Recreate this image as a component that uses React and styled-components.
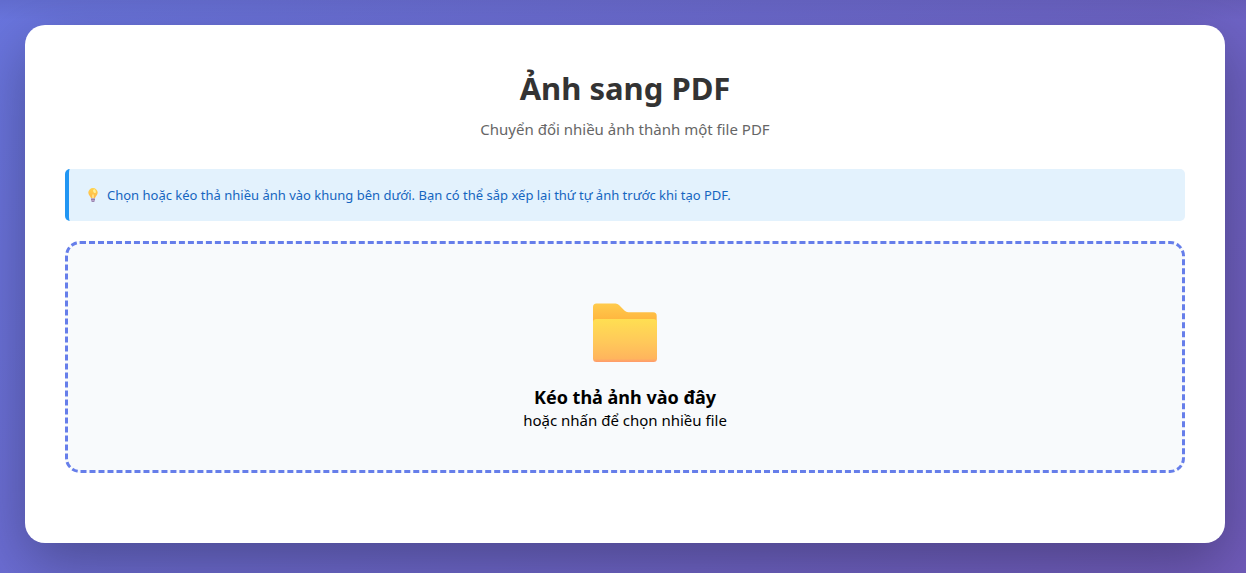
import React from 'react';
import styled, { createGlobalStyle } from 'styled-components';

const GlobalStyle = createGlobalStyle`
  * { box-sizing: border-box; margin: 0; padding: 0; }
  body {
    font-family: 'Segoe UI', 'Noto Sans', 'Open Sans', sans-serif;
    font-size: 15px;
    line-height: 22px;
    color: #000;
  }
`;

const Page = styled.div`
  min-height: 100vh;
  padding: 25px 21px 30px 25px;
  background:
    linear-gradient(180deg, rgba(0, 0, 0, 0.07) 0, rgba(0, 0, 0, 0) 20px),
    linear-gradient(135deg, #6975de 0%, #705bba 100%);
`;

const Card = styled.main`
  max-width: 1200px;
  margin: 0 auto;
  padding: 41px 40px 70px;
  background: #fff;
  border-radius: 20px;
  box-shadow: 0 20px 60px rgba(0, 0, 0, 0.3);
`;

const Title = styled.h1`
  margin-bottom: 8px;
  color: #333;
  font-size: 31px;
  line-height: 44px;
  text-align: center;
`;

const Subtitle = styled.p`
  margin-bottom: 29px;
  color: #666;
  text-align: center;
`;

const InfoBox = styled.div`
  display: flex;
  align-items: center;
  gap: 6px;
  margin-bottom: 20px;
  padding: 16px;
  border-left: 4px solid #2196f3;
  border-radius: 5px;
  background: #e3f2fd;
  color: #1565c0;
  font-size: 13px;
  line-height: 20px;
`;

const BulbIcon = styled.svg`
  flex: none;
  width: 16px;
  height: 16px;
`;

const DropZone = styled.label`
  display: flex;
  flex-direction: column;
  align-items: center;
  padding: 57px 40px 39px;
  border: 3px dashed #667eea;
  border-radius: 15px;
  background: #f8fafc;
  text-align: center;
  cursor: pointer;
`;

const FileInput = styled.input`
  position: absolute;
  width: 1px;
  height: 1px;
  opacity: 0;
`;

const FolderIcon = styled.svg`
  width: 64px;
  height: 64px;
  margin-bottom: 20px;
`;

const DropTitle = styled.strong`
  font-size: 18px;
  line-height: 24px;
`;

const DropHint = styled.span``;

function Bulb() {
  return (
    <BulbIcon viewBox="0 0 16 16" aria-hidden="true">
      <defs>
        <linearGradient id="bulb" x1="0" y1="0" x2="0" y2="1">
          <stop offset="0" stopColor="#ffd34e" />
          <stop offset="1" stopColor="#ffb84a" />
        </linearGradient>
      </defs>
      <path d="M8 1a4.7 4.7 0 0 0-4.7 4.7c0 2.300 2.500 3.500 2.700 5.600h4c.2-2.100 2.700-3.300 2.700-5.600A4.700 4.700 0 0 0 8 1z" fill="url(#bulb)" />
      <ellipse cx="9.500" cy="4.200" rx="1.300" ry="1.900" fill="#fff09a" transform="rotate(-25 9.500 4.200)" />
      <path d="M7 7l1 1 1-1v4.300H7z" fill="#ffdf80" />
      <path d="M6 11.300h4v2.200a1 1 0 0 1-1 1H7a1 1 0 0 1-1-1z" fill="#b6a1c8" />
      <path d="M6 12.400h4M6.700 14.500h2.600" stroke="#836b9c" strokeWidth=".7" />
    </BulbIcon>
  );
}

function Folder() {
  return (
    <FolderIcon viewBox="0 0 64 64" aria-hidden="true">
      <defs>
        <linearGradient id="folderBack" x1="0" y1="0" x2="0" y2="1">
          <stop offset="0" stopColor="#ffcb4c" />
          <stop offset=".36" stopColor="#ffb53f" />
          <stop offset="1" stopColor="#ffb53f" />
        </linearGradient>
        <linearGradient id="folderFront" x1="0" y1="0" x2="0" y2="1">
          <stop offset="0" stopColor="#ffdf52" />
          <stop offset=".55" stopColor="#ffc85a" />
          <stop offset=".92" stopColor="#ffb55d" />
          <stop offset="1" stopColor="#ff9a6c" />
        </linearGradient>
      </defs>
      <path d="M0 6a3.500 3.500 0 0 1 3.500-3.500h19a5 5 0 0 1 3.500 1.500l5.700 5.800a5 5 0 0 0 3.500 1.500h25a3.500 3.500 0 0 1 3.500 3.500V50H0z" fill="url(#folderBack)" />
      <path d="M3.500 18h57a3.500 3.500 0 0 1 3.500 3.500v36a3.500 3.500 0 0 1-3.500 3.500h-57A3.500 3.500 0 0 1 0 57.500v-36A3.500 3.500 0 0 1 3.500 18z" fill="url(#folderFront)" />
    </FolderIcon>
  );
}

export default function App() {
  return (
    <>
      <GlobalStyle />
      <Page>
        <Card>
          <Title>Ảnh sang PDF</Title>
          <Subtitle>Chuyển đổi nhiều ảnh thành một file PDF</Subtitle>
          <InfoBox>
            <Bulb />
            <span>
              Chọn hoặc kéo thả nhiều ảnh vào khung bên dưới. Bạn có thể sắp xếp lại thứ tự ảnh trước khi tạo PDF.
            </span>
          </InfoBox>
          <DropZone htmlFor="images">
            <FileInput id="images" type="file" accept="image/*" multiple />
            <Folder />
            <DropTitle>Kéo thả ảnh vào đây</DropTitle>
            <DropHint>hoặc nhấn để chọn nhiều file</DropHint>
          </DropZone>
        </Card>
      </Page>
    </>
  );
}
